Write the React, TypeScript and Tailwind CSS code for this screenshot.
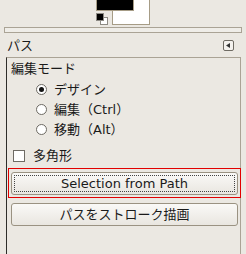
import React from 'react';

const font = { fontFamily: '"DejaVu Sans", "Noto Sans CJK JP", sans-serif' };

function Radio({ checked, label }: { checked?: boolean; label: string }) {
  return (
    <div className="flex items-center h-[20px] pl-[29px]">
      <span className="w-[11px] h-[11px] rounded-full border border-[#6e6b64] bg-white flex items-center justify-center">
        {checked && <span className="w-[5px] h-[5px] rounded-full bg-[#111]" />}
      </span>
      <span className="ml-[7px] text-[13px] leading-none text-[#1a1a1a]">{label}</span>
    </div>
  );
}

export default function App() {
  return (
    <div
      className="w-[246px] h-[254px] bg-[#ebe8e2] overflow-hidden flex flex-col text-[#1a1a1a]"
      style={font}
    >
      {/* colour swatches */}
      <div className="h-[27px] shrink-0">
        <div className="relative ml-[96px] w-[55px] h-[26px]">
          <div className="absolute left-[16px] top-[-1px] w-[38px] h-[26px] bg-white border border-[#a69c86]" />
          <div className="absolute left-0 top-[-1px] w-[38px] h-[12px] bg-black border border-[#a69c86]" />
          <div className="absolute left-[4px] top-[17px] w-[8px] h-[8px] bg-white border border-[#8d8a84]" />
          <div className="absolute left-0 top-[13px] w-[8px] h-[8px] bg-black border border-[#8d8a84]" />
        </div>
      </div>

      <div className="mx-[4px] h-[6px] shrink-0 border border-[#aaa395] bg-[#efede8]" />

      {/* header */}
      <div className="flex items-center justify-between h-[23px] mt-[1px] pl-[7px] pr-[12px] shrink-0">
        <span className="text-[13px]">パス</span>
        <span className="w-[11px] h-[11px] rounded-[2px] border border-[#6f6b63] bg-[#f4f2ee] flex items-center justify-center">
          <svg width="5" height="5" viewBox="0 0 5 5">
            <path d="M4 0 L0 2.5 L4 5 Z" fill="#333" />
          </svg>
        </span>
      </div>

      {/* tool options frame */}
      <div className="ml-[6px] w-[235px] flex-1 border-t border-r border-l border-t-[#aaa395] border-r-[#aaa395] border-l-[#2e2d2a] pt-[4px]">
        <div className="pl-[4px] h-[14px] text-[13px] leading-none">編集モード</div>
        <div className="mt-[3px] flex flex-col">
          <Radio checked label="デザイン" />
          <Radio label="編集（Ctrl）" />
          <Radio label="移動（Alt）" />
        </div>

        <div className="flex items-center mt-[10px] pl-[6px] h-[13px]">
          <span className="w-[12px] h-[12px] border border-[#6e6b64] bg-white" />
          <span className="ml-[8px] text-[13px] leading-none">多角形</span>
        </div>

        <div className="mt-[6px] ml-[1px] w-[233px] h-[30px] border border-[#e20000] px-[2px] pt-[3px]">
          <button className="w-[227px] h-[23px] rounded-[3px] border border-[#9a9282] bg-gradient-to-b from-[#faf9f7] to-[#e9e6e0] p-[2px] flex">
            <span className="flex-1 border border-dotted border-[#444] rounded-[1px] flex items-center justify-center text-[13px] leading-none">
              Selection from Path
            </span>
          </button>
        </div>

        <button className="mt-[5px] ml-[4px] w-[227px] h-[23px] rounded-[3px] border border-[#9a9282] bg-gradient-to-b from-[#faf9f7] to-[#e9e6e0] flex items-center justify-center text-[13px] leading-none">
          パスをストローク描画
        </button>
      </div>
    </div>
  );
}
